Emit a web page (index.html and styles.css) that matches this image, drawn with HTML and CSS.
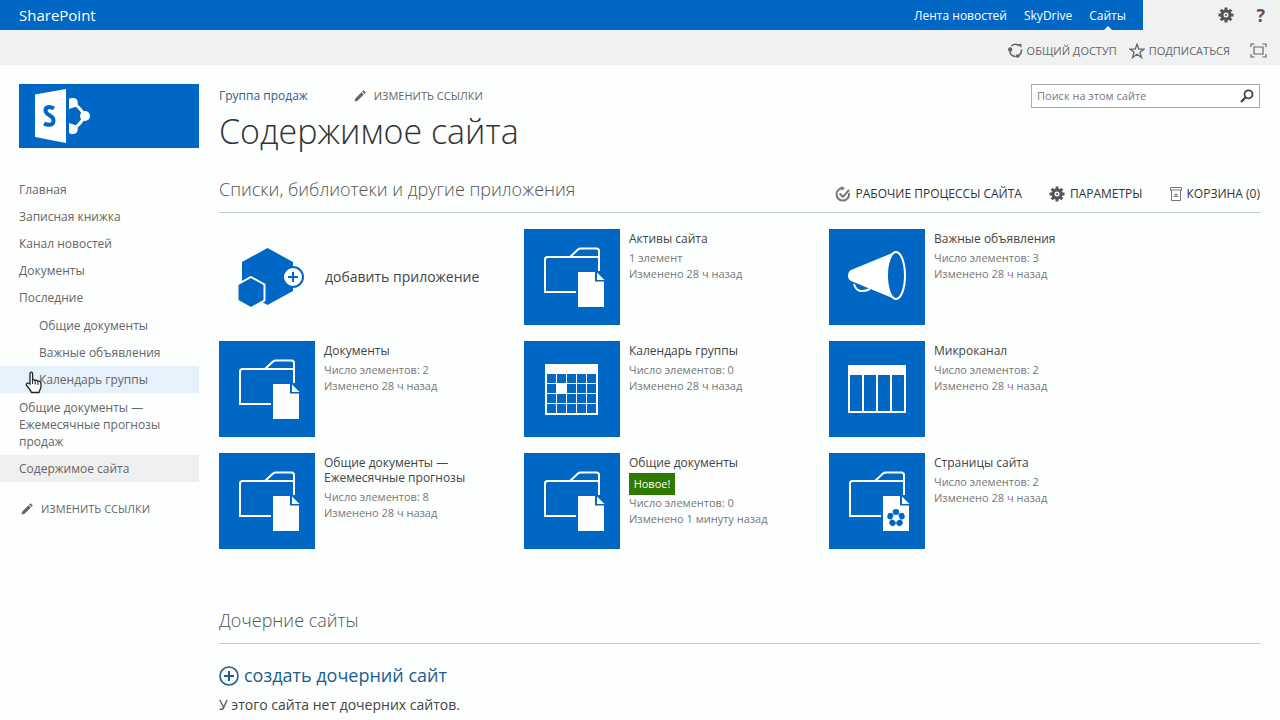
FILE: index.html
```html
<!DOCTYPE html>
<html lang="ru">
<head>
<meta charset="utf-8">
<title>Содержимое сайта</title>
<link rel="stylesheet" href="styles.css">
</head>
<body>
<svg class="defs" aria-hidden="true">
  <defs>
    <symbol id="gear" viewBox="0 0 16 16">
      <g fill="currentColor">
        <rect x="6.5" y="0.5" width="3" height="4"/><rect x="6.5" y="11.5" width="3" height="4"/>
        <rect x="0.5" y="6.5" width="4" height="3"/><rect x="11.5" y="6.5" width="4" height="3"/>
        <g transform="rotate(45 8 8)"><rect x="6.5" y="0.5" width="3" height="4"/><rect x="6.5" y="11.5" width="3" height="4"/><rect x="0.5" y="6.5" width="4" height="3"/><rect x="11.5" y="6.5" width="4" height="3"/></g>
      </g>
      <circle cx="8" cy="8" r="4" fill="none" stroke="currentColor" stroke-width="3"/>
      <circle cx="8" cy="8" r="1" fill="currentColor"/>
    </symbol>
    <symbol id="pencil" viewBox="0 0 12 12">
      <path d="M0.5 11.5 1.300 8.500 7.500 2.300 9.800 4.600 3.600 10.800zM8.200 1.600 9.500 .3 11.800 2.600 10.500 3.900z" fill="currentColor"/>
    </symbol>
    <symbol id="folder" viewBox="0 0 96 96">
      <path d="M52 63H21V30.500Q21 28 23.500 28H75M46 28l8-7.500Q55 19.500 57 19.500H72.500Q75 19.500 75 22V42" fill="none" stroke="#fff" stroke-width="2"/>
      <path d="M54 43H71v9.500h9V78H54z" fill="#fff"/>
      <path d="M73 43.500V51h7.500z" fill="#fff"/>
    </symbol>
  </defs>
</svg>

<header class="suite">
  <div class="suite-bar">
    <a class="brand" href="#">SharePoint</a>
    <nav class="suite-nav">
      <a href="#">Лента новостей</a>
      <a href="#">SkyDrive</a>
      <a class="current" href="#">Сайты</a>
    </nav>
  </div>
  <div class="suite-tools">
    <button aria-label="Параметры"><svg width="16" height="16"><use href="#gear"/></svg></button>
    <button class="help" aria-label="Справка">?</button>
  </div>
</header>

<div class="ribbon">
  <button>
    <svg width="15" height="15" viewBox="0 0 15 15" fill="none" stroke="currentColor" stroke-width="1.600"><path d="M3.500 2.800A6 6 0 0 1 11.500 3M13.400 6.500A6 6 0 0 1 11 12.300M7.800 13.500A6 6 0 0 1 1.800 8.500"/><path d="M0 6.500a2.200 2.200 0 1 0 4.400 0 2.200 2.200 0 1 0-4.400 0M10 1h3.500v4M8 11.500h3.500v3H8z" fill="currentColor" stroke="none"/></svg>
    <span>ОБЩИЙ ДОСТУП</span>
  </button>
  <button>
    <svg width="16" height="16" viewBox="0 0 16 16" fill="none" stroke="currentColor" stroke-width="1.300"><path d="M8 1.300 9.800 6.200H15L10.900 9.300 12.500 14.500 8 11.300 3.500 14.500 5.100 9.300 1 6.200H6.200z"/></svg>
    <span>ПОДПИСАТЬСЯ</span>
  </button>
  <button class="focus" aria-label="Сосредоточиться на содержимом">
    <svg width="17" height="15" viewBox="0 0 17 15" fill="none" stroke="currentColor" stroke-width="1.200"><path d="M1 4V1H4.500M12.500 1H16V4M16 11v3H12.500M4.500 14H1V11M4 4h9v7H4z"/></svg>
  </button>
</div>

<div class="page">
  <aside class="side">
    <a class="logo" href="#" aria-label="SharePoint">
      <svg width="72" height="64" viewBox="0 0 72 64">
        <path d="M16 10.500 47 5V59L16 53z" fill="#fff"/>
        <path d="M35 24.500Q32.500 23 30 23 26.500 23.200 26.500 26.500 26.500 29 30.500 31.300 34.500 33.500 34.500 36.500 34.500 40.800 29.800 40.800 27.300 40.800 25 39.500" fill="none" stroke="#0067c5" stroke-width="4"/>
        <path d="M54 19Q61 23 66 32 61 41 54 45" fill="none" stroke="#fff" stroke-width="3"/>
        <path d="M50 15Q52 13.500 54 14a4.700 4.700 0 0 1 2 9Q53 24 50 25zM50 39Q53 40 56 41a4.700 4.700 0 0 1-2 9Q52 50.500 50 49z" fill="#fff"/>
        <circle cx="66" cy="32" r="5" fill="#fff"/>
      </svg>
    </a>
    <nav>
      <ul class="links">
        <li><a href="#">Главная</a></li>
        <li><a href="#">Записная книжка</a></li>
        <li><a href="#">Канал новостей</a></li>
        <li><a href="#">Документы</a></li>
        <li><a href="#">Последние</a>
          <ul class="sub">
            <li><a href="#">Общие документы</a></li>
            <li><a href="#">Важные объявления</a></li>
            <li class="hovered"><a href="#">Календарь группы</a>
              <svg class="cursor" width="18" height="24" viewBox="0 0 18 24" aria-hidden="true"><path d="M5 13V3Q5 1.200 6.300 1.200T7.600 3V9Q8.500 8 10 9.500 11.500 8.600 12.800 10.300 15.800 9.500 16 13V16L14 21.500H6.500Q5 18 1.500 14.500 .8 12.500 2.500 12z" fill="#fff" stroke="#222" stroke-width="1.300"/><path d="M7.600 9v4M10.200 10v3.500M13 11v3" stroke="#222" fill="none"/></svg>
            </li>
          </ul>
        </li>
        <li><a href="#">Общие документы — Ежемесячные прогнозы продаж</a></li>
        <li class="selected"><a href="#">Содержимое сайта</a></li>
      </ul>
      <button class="edit side-edit"><svg width="12" height="12"><use href="#pencil"/></svg><span>ИЗМЕНИТЬ ССЫЛКИ</span></button>
    </nav>
  </aside>

  <main class="main">
    <div class="head">
      <div class="crumbs">
        <a href="#">Группа продаж</a>
        <button class="edit"><svg width="12" height="12"><use href="#pencil"/></svg><span>ИЗМЕНИТЬ ССЫЛКИ</span></button>
      </div>
      <form class="search">
        <input type="text" placeholder="Поиск на этом сайте" aria-label="Поиск на этом сайте">
        <button type="button" aria-label="Найти"><svg width="14" height="14" viewBox="0 0 14 14" fill="none" stroke="currentColor"><circle cx="8.500" cy="5.300" r="4" stroke-width="1.800"/><path d="M5.700 8.300 1 13" stroke-width="2.300"/></svg></button>
      </form>
    </div>
    <h1>Содержимое сайта</h1>

    <div class="section-head">
      <h2>Списки, библиотеки и другие приложения</h2>
      <div class="actions">
        <button><svg width="16" height="16" viewBox="0 0 16 16" fill="none" stroke="#777" stroke-width="2"><path d="M8 2A6.300 6.300 0 1 0 14 7M4.500 7.500 8 10.800 14 4"/><path d="M6.500 0 10 2.300 6.500 4.700z" fill="#777" stroke="none"/></svg><span>РАБОЧИЕ ПРОЦЕССЫ САЙТА</span></button>
        <button><svg width="16" height="16"><use href="#gear"/></svg><span>ПАРАМЕТРЫ</span></button>
        <button><svg width="12" height="16" viewBox="0 0 12 16" fill="none" stroke="#777"><path d="M.5 1.500H11.500V4H.5zM1.500 4V14.500H10.500V4M6 7.500 7.800 10.500H4.200z"/></svg><span>КОРЗИНА (0)</span></button>
      </div>
    </div>

    <ul class="apps">
      <li class="app add">
        <a class="tile-add" href="#" aria-label="Добавить приложение"><svg width="96" height="96" viewBox="0 0 96 96"><path d="M48.500 19 74 33V62L48.500 76 23 62V33z" fill="#0067c5"/><path d="M32 48 45.500 55.500V71.500L32 79 18.500 71.500V55.500z" fill="#0067c5" stroke="#fff" stroke-width="2"/><circle cx="74" cy="48" r="10" fill="#fff" stroke="#0067c5" stroke-width="2"/><path d="M74 43V53M69 48H79" stroke="#0067c5" stroke-width="2"/></svg></a>
        <a class="add-name" href="#">добавить приложение</a>
      </li>
      <li class="app">
        <a class="tile" href="#" aria-label="Активы сайта"><svg width="96" height="96"><use href="#folder"/></svg></a>
        <div class="info"><a href="#">Активы сайта</a><p>1 элемент</p><p>Изменено 28 ч назад</p></div>
      </li>
      <li class="app">
        <a class="tile" href="#" aria-label="Важные объявления"><svg width="96" height="96" viewBox="0 0 96 96" fill="none" stroke="#fff"><path d="M25 55Q28 66 41 60" stroke-width="2"/><path d="M67 22.500 22 41Q19 43 19 46.500T22 52L67 70.500Q58 62 58 46.500T67 22.500z" fill="#fff" stroke="none"/><ellipse cx="67" cy="46.500" rx="9" ry="23.500" fill="#0067c5" stroke-width="2"/></svg></a>
        <div class="info"><a href="#">Важные объявления</a><p>Число элементов: 3</p><p>Изменено 28 ч назад</p></div>
      </li>
      <li class="app">
        <a class="tile" href="#" aria-label="Документы"><svg width="96" height="96"><use href="#folder"/></svg></a>
        <div class="info"><a href="#">Документы</a><p>Число элементов: 2</p><p>Изменено 28 ч назад</p></div>
      </li>
      <li class="app">
        <a class="tile" href="#" aria-label="Календарь группы"><svg width="96" height="96" viewBox="0 0 96 96"><path d="M21 23H74V33H21zM32 42H42V52H32z" fill="#fff"/><path d="M22 33V73H73V33" fill="none" stroke="#fff" stroke-width="2"/><path d="M32.500 33V73M42.500 33V73M52.500 33V73M62.500 33V73M22 42.500H73M22 52.500H73M22 62.500H73" stroke="#fff"/></svg></a>
        <div class="info"><a href="#">Календарь группы</a><p>Число элементов: 0</p><p>Изменено 28 ч назад</p></div>
      </li>
      <li class="app">
        <a class="tile" href="#" aria-label="Микроканал"><svg width="96" height="96" viewBox="0 0 96 96"><path d="M19 24H77V34H19z" fill="#fff"/><path d="M20 34V71H76V34M34 34V71M48 34V71M62 34V71" fill="none" stroke="#fff" stroke-width="2"/></svg></a>
        <div class="info"><a href="#">Микроканал</a><p>Число элементов: 2</p><p>Изменено 28 ч назад</p></div>
      </li>
      <li class="app">
        <a class="tile" href="#" aria-label="Общие документы — Ежемесячные прогнозы"><svg width="96" height="96"><use href="#folder"/></svg></a>
        <div class="info"><a href="#">Общие документы — Ежемесячные прогнозы</a><p>Число элементов: 8</p><p>Изменено 28 ч назад</p></div>
      </li>
      <li class="app">
        <a class="tile" href="#" aria-label="Общие документы"><svg width="96" height="96"><use href="#folder"/></svg></a>
        <div class="info"><a href="#">Общие документы</a><span class="new">Новое!</span><p>Число элементов: 0</p><p>Изменено 1 минуту назад</p></div>
      </li>
      <li class="app">
        <a class="tile" href="#" aria-label="Страницы сайта"><svg width="96" height="96" viewBox="0 0 96 96"><use href="#folder"/><g fill="#0067c5"><ellipse cx="67" cy="59" rx="3.300" ry="3"/><ellipse cx="67" cy="59" rx="3.300" ry="3" transform="rotate(72 67 65)"/><ellipse cx="67" cy="59" rx="3.300" ry="3" transform="rotate(144 67 65)"/><ellipse cx="67" cy="59" rx="3.300" ry="3" transform="rotate(216 67 65)"/><ellipse cx="67" cy="59" rx="3.300" ry="3" transform="rotate(288 67 65)"/></g></svg></a>
        <div class="info"><a href="#">Страницы сайта</a><p>Число элементов: 2</p><p>Изменено 28 ч назад</p></div>
      </li>
    </ul>

    <div class="section-head subsites">
      <h2>Дочерние сайты</h2>
    </div>
    <a class="create" href="#"><svg width="20" height="20" viewBox="0 0 20 20" fill="none" stroke="currentColor"><circle cx="10" cy="10" r="9" stroke-width="1.600"/><path d="M10 5V15M5 10H15" stroke-width="2"/></svg><span>создать дочерний сайт</span></a>
    <p class="empty">У этого сайта нет дочерних сайтов.</p>
  </main>
</div>
</body>
</html>
```

FILE: styles.css
```css
* { box-sizing: border-box; }
body { margin: 0; background: #fdfefe; color: #444; font: 12px/16px "Open Sans", "Noto Sans", sans-serif; }
a { color: inherit; text-decoration: none; }
button { border: 0; padding: 0; background: none; color: inherit; font: inherit; display: flex; align-items: center; cursor: pointer; }
ul { list-style: none; margin: 0; padding: 0; }
p, h1, h2 { margin: 0; }
svg { display: block; flex: none; }
.defs { position: absolute; width: 0; height: 0; }

.suite { display: flex; height: 30px; background: #f0f2f2; }
.suite-bar { flex: 1; display: flex; justify-content: space-between; align-items: center; padding: 0 17px 0 19px; background: #0067c5; color: #fff; }
.brand { font-size: 15px; }
.suite-nav { display: flex; align-self: stretch; gap: 17px; line-height: 32px; }
.suite-nav .current { position: relative; }
.current::after { content: ""; position: absolute; left: 50%; bottom: 0; margin-left: -4px; border: 4px solid transparent; border-top: 0; border-bottom-color: #f0f2f2; }
.suite-tools { width: 137px; display: flex; justify-content: flex-end; gap: 22px; padding-right: 15px; color: #555; }
.help { font-size: 18px; font-weight: 700; }

.ribbon { display: flex; justify-content: flex-end; height: 35px; padding: 6px 13px 0 0; gap: 12px; background: #f0f2f2; color: #666; font-size: 11px; }
.ribbon button { gap: 4px; }
.ribbon .focus { margin-left: 8px; }

.page { display: flex; padding: 19px 20px 0 0; }
.side { width: 199px; flex: none; color: #666; }
.logo { display: block; height: 64px; margin: 0 0 28px 19px; background: #0067c5; }
.links { line-height: 17px; }
.links a { display: block; padding: 5px 20px 5px 19px; }
.links .sub { padding: 1px 0; }
.links .sub a { padding-left: 39px; }
.hovered { position: relative; background: #e6f1fb; }
.cursor { position: absolute; left: 25px; top: 5px; }
.selected { background: #efefef; }
.edit { gap: 8px; color: #666; font-size: 11px; }
.side-edit { margin: 19px 0 0 21px; }

.main { flex: 1; min-width: 0; padding-left: 20px; }
.head { display: flex; justify-content: space-between; }
.crumbs { display: flex; align-items: center; gap: 46px; color: #2f5d97; height: 24px; }
.search { display: flex; align-items: center; width: 229px; height: 24px; border: 1px solid #ababab; background: #fff; color: #444; }
.search input { flex: 1; min-width: 0; border: 0; outline: 0; padding: 0 5px; background: none; font: inherit; font-size: 11px; }
.search input::placeholder { color: #777; opacity: 1; }
.search button { padding-right: 5px; }
h1 { font-size: 34px; line-height: 46px; font-weight: 300; color: #333; }
.section-head { display: flex; justify-content: space-between; align-items: center; height: 46px; margin-top: 13px; border-bottom: 1px solid #c6c9cb; }
h2 { padding-bottom: 2px; font-size: 18px; line-height: 24px; font-weight: 300; color: #555; }
.actions { display: flex; gap: 27px; padding-top: 8px; color: #333; }
.actions button { gap: 5px; }
.actions svg { color: #555; }

.apps { display: grid; grid-template-columns: repeat(auto-fill, 304px); gap: 16px 1px; margin-top: 16px; }
.app { display: flex; height: 96px; }
.tile { width: 96px; flex: none; background: #0067c5; }
.info { width: 160px; padding: 2px 0 0 9px; font-size: 11px; }
.info a { display: block; margin-bottom: 4px; font-size: 12px; line-height: 15px; }
.info p { color: #777; }
.new { display: block; width: 46px; margin-top: -1px; background: #2f7a00; color: #fff; line-height: 22px; text-align: center; }
.add { align-items: center; }
.add-name { padding-left: 10px; font-size: 14px; }

.subsites { margin-top: 49px; }
.create { display: flex; align-items: center; gap: 5px; margin-top: 19px; color: #205d8e; font-size: 18px; line-height: 24px; }
.create span { padding-bottom: 2px; }
.empty { margin-top: 8px; font-size: 14px; }
```
